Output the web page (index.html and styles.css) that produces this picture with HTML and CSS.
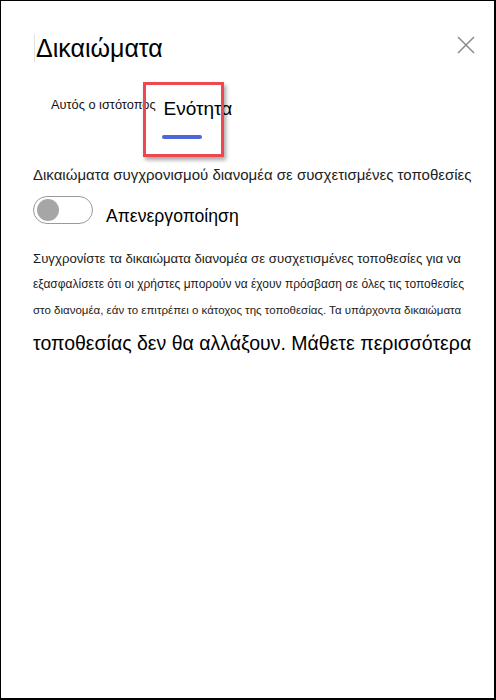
FILE: index.html
```html
<!DOCTYPE html>
<html lang="el">
<head>
<meta charset="utf-8">
<title>Δικαιώματα</title>
<link rel="stylesheet" href="styles.css">
</head>
<body>
<div class="panel">
  <div class="header">
    <h1 class="title">Δικαιώματα</h1>
    <button class="close" aria-label="Κλείσιμο">
      <svg width="18" height="18" viewBox="0 0 18 18"><path d="M1 1 L17 17 M17 1 L1 17" stroke="#8a8a8a" stroke-width="1.5" fill="none"/></svg>
    </button>
  </div>
  <div class="tabs">
    <div class="tab tab-site">Αυτός ο ιστότοπος</div>
    <div class="tab tab-hub">
      <span class="tab-label">Ενότητα</span>
      <span class="tab-bar"></span>
      <span class="highlight"></span>
    </div>
  </div>
  <div class="sync-title">Δικαιώματα συγχρονισμού διανομέα σε συσχετισμένες τοποθεσίες</div>
  <div class="toggle-row">
    <span class="toggle"><span class="knob"></span></span>
    <span class="toggle-label">Απενεργοποίηση</span>
  </div>
  <div class="desc">
    <span class="line l1">Συγχρονίστε τα δικαιώματα διανομέα σε συσχετισμένες τοποθεσίες για να</span>
    <span class="line l2">εξασφαλίσετε ότι οι χρήστες μπορούν να έχουν πρόσβαση σε όλες τις τοποθεσίες</span>
    <span class="line l3">στο διανομέα, εάν το επιτρέπει ο κάτοχος της τοποθεσίας. Τα υπάρχοντα δικαιώματα</span>
    <span class="line l4">τοποθεσίας δεν θα αλλάξουν. Μάθετε περισσότερα</span>
  </div>
</div>
</body>
</html>
```

FILE: styles.css
```css
* { box-sizing: border-box; }
html, body { margin: 0; padding: 0; background: #fff; }
body { font-family: "Liberation Sans", Arial, sans-serif; color: #1b1b1b; }

.panel {
  width: 496px;
  height: 700px;
  border-style: solid;
  border-color: #000;
  border-width: 1px 2px 2px 1px;
  padding: 33px 19px 0 32px;
  background: #fff;
}

.header {
  display: flex;
  justify-content: space-between;
  align-items: flex-start;
}
.title {
  margin: 0 0 0 1px;
  font-weight: normal;
  font-size: 25px;
  line-height: 28px;
  color: #000;
  border-left: 1px solid #e2e2e2;
  padding-left: 1px;
}
.close {
  margin: 2px 0 0 0;
  padding: 0;
  border: 0;
  background: none;
  width: 18px;
  height: 18px;
  display: block;
}
.close svg { display: block; }

.tabs {
  display: flex;
  align-items: flex-start;
  margin-top: 36px;
  padding-left: 18px;
}
.tab-site {
  font-size: 12.8px;
  line-height: 14px;
  color: #111;
}
.tab-hub {
  position: relative;
  margin-left: 8px;
  display: flex;
  flex-direction: column;
}
.tab-label {
  font-size: 19px;
  line-height: 22px;
  color: #000;
}
.tab-bar {
  display: block;
  width: 40px;
  height: 4px;
  border-radius: 2px;
  background: #4d68d6;
  margin: 15px 0 0 -2px;
}
.highlight {
  position: absolute;
  left: -21px;
  top: -16px;
  width: 81px;
  height: 75px;
  border: 3px solid #ef474f;
  box-shadow: 2px 3px 4px rgba(0, 0, 0, 0.35);
}

.sync-title {
  margin-top: 27px;
  font-size: 15px;
  line-height: 18px;
  color: #222;
  white-space: nowrap;
}

.toggle-row {
  display: flex;
  align-items: flex-start;
  margin-top: 12px;
}
.toggle {
  display: block;
  width: 60px;
  height: 28px;
  border: 1px solid #9a9a9a;
  border-radius: 14px;
  position: relative;
}
.knob {
  position: absolute;
  left: 3px;
  top: 2px;
  width: 22px;
  height: 22px;
  border-radius: 50%;
  background: #a6a6a6;
}
.toggle-label {
  margin-left: 13px;
  margin-top: 9px;
  font-size: 17.6px;
  line-height: 22px;
  color: #000;
}

.desc {
  margin-top: 19px;
  color: #1b1b1b;
}
.line { display: block; white-space: nowrap; }
.l1 { font-size: 13.2px; line-height: 26px; }
.l2 { font-size: 12px; line-height: 25px; }
.l3 { font-size: 11.5px; line-height: 26px; }
.l4 { font-size: 19.5px; line-height: 40px; color: #000; }
```
